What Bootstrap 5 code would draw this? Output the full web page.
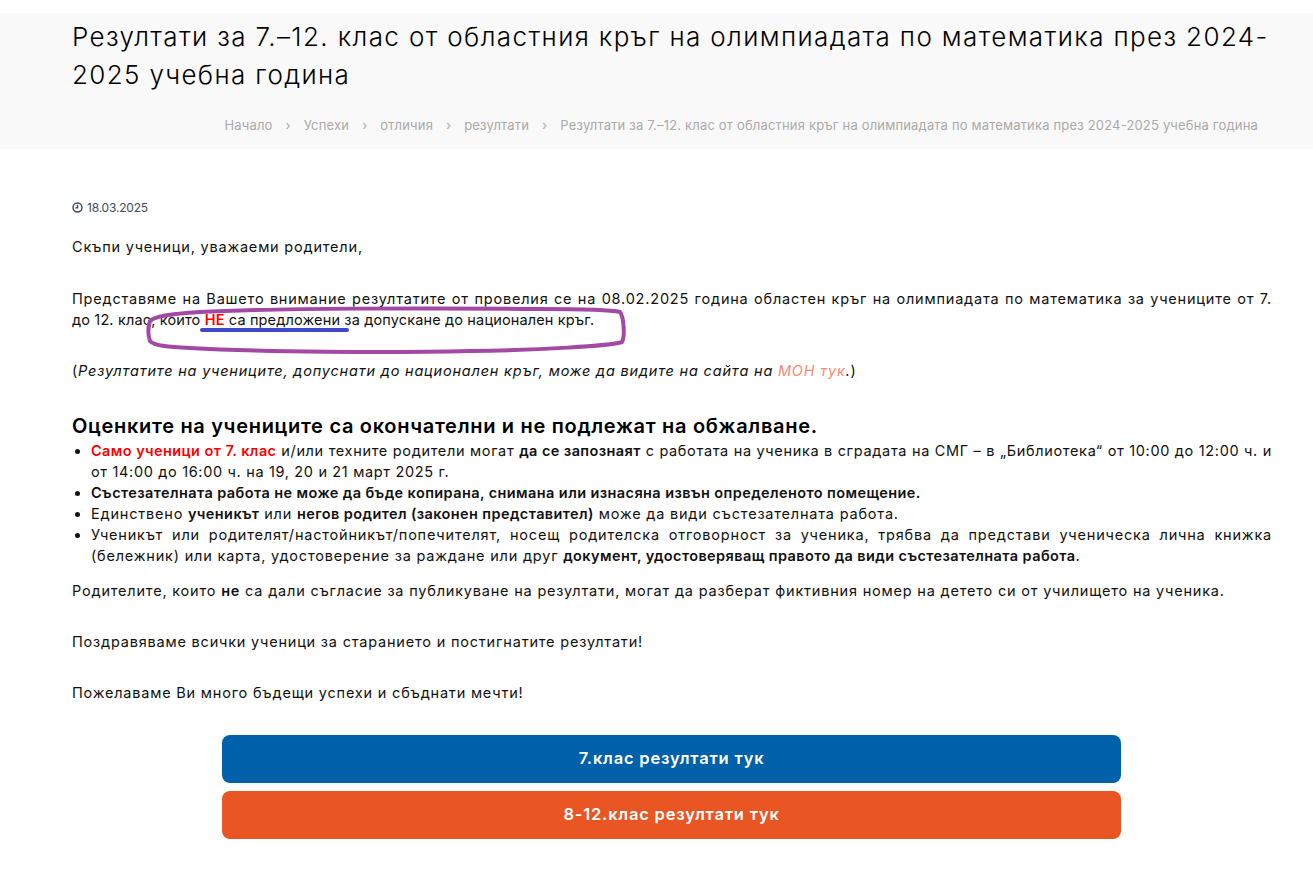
<!DOCTYPE html>
<html lang="bg">
<head>
    <meta charset="UTF-8">
    <title>Резултати</title>
    <link href="https://cdn.jsdelivr.net/npm/bootstrap@5.3.3/dist/css/bootstrap.min.css" rel="stylesheet">
    <style>
        body {
            font-family: Inter, "Noto Sans", sans-serif;
            font-size: 14.5px;
            line-height: 21.4px;
            letter-spacing: 0.8px;
            color: #111;
            background-color: #fff;
        }

        .title-band {
            margin-top: 13px;
            height: 136px;
            background-color: #f9f9f9;
            padding: 5px 41px 0 72px;
        }

        .title-band h1 {
            font-size: 26px;
            font-weight: 300;
            line-height: 38px;
            letter-spacing: 1.37px;
            color: #000;
            margin: 0;
        }

        .crumbs {
            margin-top: 21px;
            padding-right: 14px;
            font-size: 13px;
            letter-spacing: 0.18px;
            color: #aaa;
            gap: 13px;
        }

        .page-body {
            position: relative;
            padding: 48px 41px 0 72px;
        }

        .post-date {
            font-size: 12px;
            letter-spacing: -0.2px;
            color: #3d4a5c;
            margin-bottom: 18px;
        }

        .page-body p {
            margin-bottom: 30px;
        }

        .page-body p.just-text {
            margin-bottom: 29.5px;
        }

        .first-line {
            display: block;
            text-align: justify;
            text-align-last: justify;
        }

        .second-line {
            display: block;
            letter-spacing: 0.15px;
        }

        .page-body h4 {
            font-size: 20px;
            font-weight: 600;
            line-height: 24px;
            letter-spacing: 0.7px;
            color: #000;
            margin: 32px 0 2px;
        }

        .page-body ul {
            margin-bottom: 14px;
            padding-left: 19px;
            line-height: 21px;
            text-align: justify;
        }

        .page-body ul b {
            font-weight: 600;
            letter-spacing: 0.4px;
        }

        .tight-item {
            letter-spacing: 0.66px;
        }

        .page-body b {
            font-weight: 600;
        }

        .red-text {
            color: #f00;
        }

        .moh-link {
            color: #f58a75;
            text-decoration: none;
        }

        .big-btn {
            height: 48px;
            font-size: 16.5px;
            font-weight: 600;
            letter-spacing: 0.8px;
            color: #fff;
            border-radius: 8px;
        }

        .big-btn:hover {
            color: #fff;
        }

        .btn-blue {
            background-color: #0060aa;
        }

        .btn-orange {
            background-color: #e95523;
        }

        .btn-stack {
            width: 899px;
            margin: 31px 0 0 150px;
        }

        .marker-svg {
            position: absolute;
            left: 140px;
            top: 148px;
        }
    </style>
</head>
<body>

<div class="title-band">
    <h1>Резултати за 7.–12. клас от областния кръг на олимпиадата по математика през 2024-2025 учебна година</h1>
    <div class="crumbs d-flex justify-content-end align-items-center">
        <span>Начало</span><span>›</span>
        <span>Успехи</span><span>›</span>
        <span>отличия</span><span>›</span>
        <span>резултати</span><span>›</span>
        <span>Резултати за 7.–12. клас от областния кръг на олимпиадата по математика през 2024-2025 учебна година</span>
    </div>
</div>

<div class="page-body">
    <div class="post-date d-flex align-items-center gap-1">
        <svg width="11" height="11" viewBox="0 0 12 12" fill="none" stroke="#3d4a5c" stroke-width="1.6"><circle cx="6" cy="6" r="4.9"/><path d="M6 3v3.3H3.8"/></svg>
        <span>18.03.2025</span>
    </div>

    <p>Скъпи ученици, уважаеми родители,</p>

    <p class="just-text">
        <span class="first-line">Представяме на Вашето внимание резултатите от провелия се на 08.02.2025 година областен кръг на олимпиадата по математика за учениците от 7.</span>
        <span class="second-line">до 12. клас, които <b class="red-text">НЕ</b> са предложени за допускане до национален кръг.</span>
    </p>

    <p>(<i>Резултатите на учениците, допуснати до национален кръг, може да видите на сайта на <a class="moh-link" href="#">МОН тук</a>.</i>)</p>

    <h4>Оценките на учениците са окончателни и не подлежат на обжалване.</h4>
    <ul>
        <li class="tight-item"><b class="red-text">Само ученици от 7. клас</b> и/или техните родители могат <b>да се запознаят</b> с работата на ученика в сградата на СМГ – в „Библиотека“ от 10:00 до 12:00 ч. и от 14:00 до 16:00 ч. на 19, 20 и 21 март 2025 г.</li>
        <li><b>Състезателната работа не може да бъде копирана, снимана или изнасяна извън определеното помещение.</b></li>
        <li>Единствено <b>ученикът</b> или <b>негов родител (законен представител)</b> може да види състезателната работа.</li>
        <li>Ученикът или родителят/настойникът/попечителят, носещ родителска отговорност за ученика, трябва да представи ученическа лична книжка (бележник) или карта, удостоверение за раждане или друг <b>документ, удостоверяващ правото да види състезателната работа</b>.</li>
    </ul>

    <p>Родителите, които <b>не</b> са дали съгласие за публикуване на резултати, могат да разберат фиктивния номер на детето си от училището на ученика.</p>
    <p>Поздравяваме всички ученици за старанието и постигнатите резултати!</p>
    <p class="mb-0">Пожелаваме Ви много бъдещи успехи и сбъднати мечти!</p>

    <div class="btn-stack d-flex flex-column gap-2">
        <a href="#" class="btn big-btn btn-blue d-flex align-items-center justify-content-center">7.клас резултати тук</a>
        <a href="#" class="btn big-btn btn-orange d-flex align-items-center justify-content-center">8-12.клас резултати тук</a>
    </div>

    <svg class="marker-svg" width="496" height="60" viewBox="0 0 496 60" fill="none">
        <path d="M62 33H207" stroke="#3f48cc" stroke-width="4" stroke-linecap="round"/>
        <path d="M10 24C14 19 30 17 60 15C130 11 300 11 400 12C440 12 472 13 480 15C484 20 485 40 482 45C470 49 400 53 330 54C250 56 120 55 50 51C30 50 14 49 10 44C8 38 8 30 10 24Z" stroke="#a349a4" stroke-width="4"/>
    </svg>
</div>

</body>
</html>
